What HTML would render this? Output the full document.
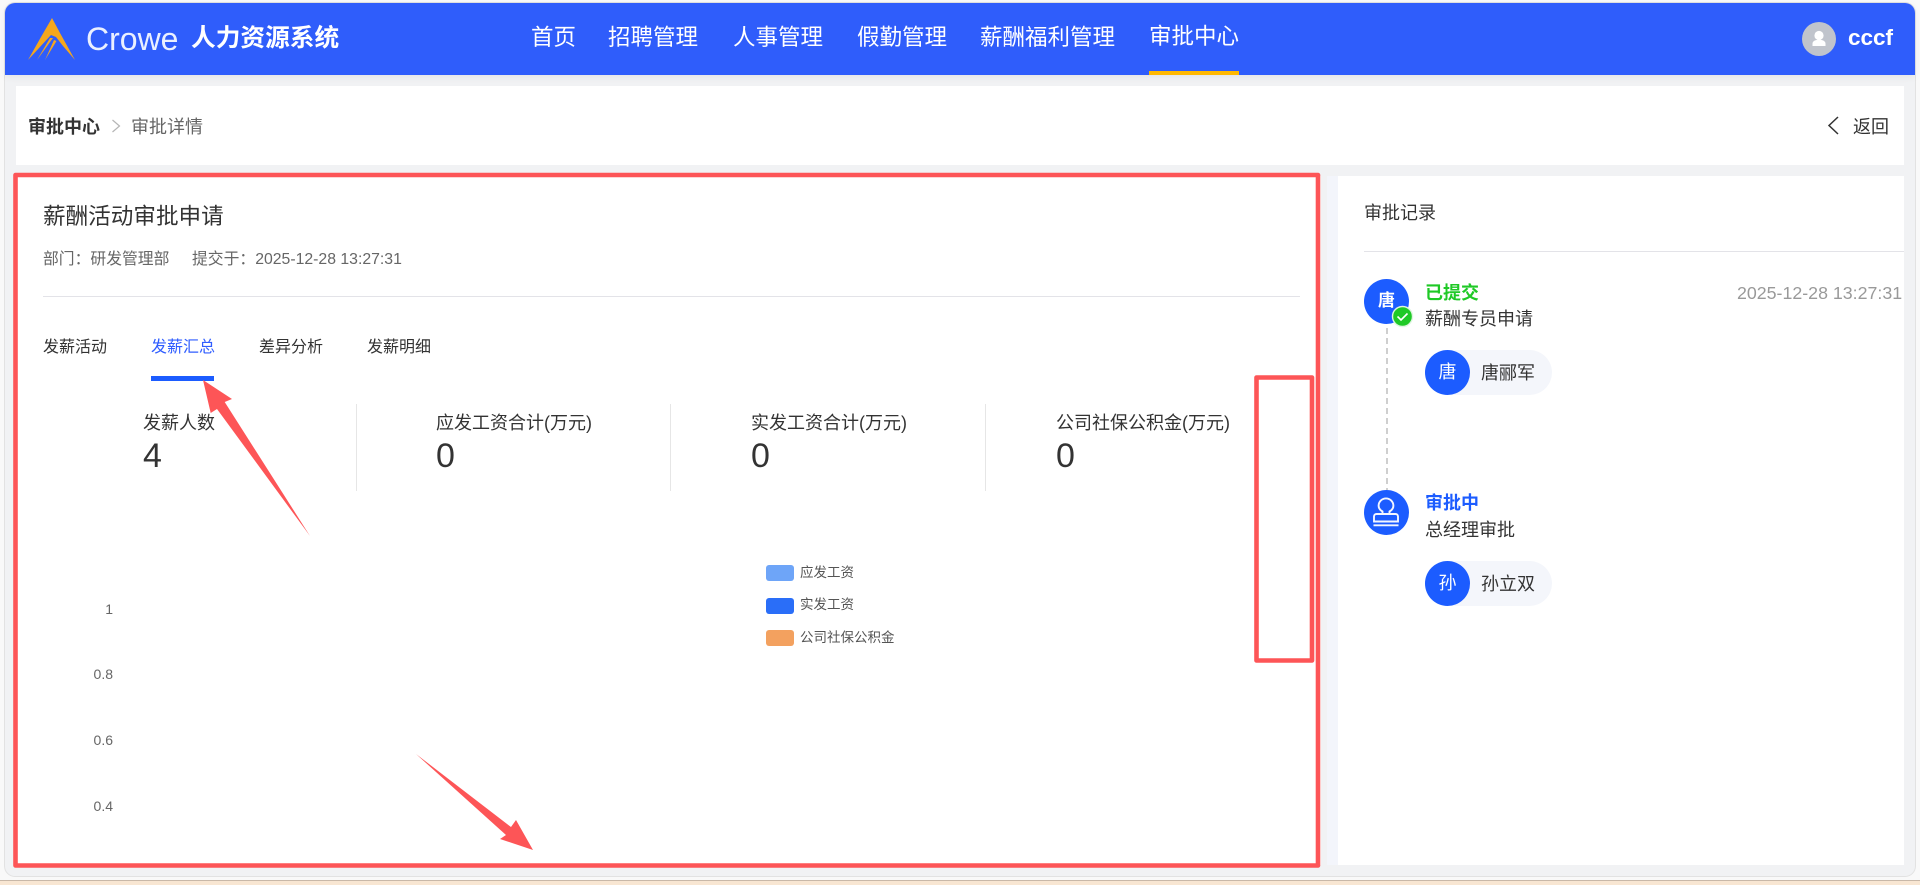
<!DOCTYPE html>
<html lang="zh-CN">
<head>
<meta charset="utf-8">
<title>审批详情</title>
<style>
html,body{margin:0;padding:0;width:1920px;height:885px;overflow:hidden;background:#f9f9f9;}
body{position:relative;font-family:"Liberation Sans","Noto Sans CJK SC",sans-serif;color:#333;}
.a{position:absolute;}
.t{position:absolute;white-space:nowrap;line-height:30px;height:30px;}
.nav{font-size:22.5px;color:#fff;top:23px;}
.c{border-radius:50%;background:#1c5cff;color:#fff;text-align:center;width:45px;height:45px;line-height:44px;font-size:18px;}
.lab{font-size:18px;color:#333;}
.num{font-size:34px;color:#333;line-height:40px;height:40px;}
.dv{position:absolute;width:1px;top:404px;height:87px;background:#e6e6e6;}
.leg{position:absolute;left:766px;width:28px;height:16px;border-radius:3px;}
.lt{font-size:13.5px;color:#555;left:800px;}
.y{font-size:14px;color:#666;text-align:right;width:40px;left:73px;}
</style>
</head>
<body>
<div class="a" style="left:5px;top:3px;width:1910px;height:873px;background:#f1f2f4;border-radius:10px;box-shadow:0 0 0 1px #e2e2e2;"></div>
<div class="a" style="left:0;top:880px;width:1920px;height:5px;background:#f8e6d2;border-top:1px solid #c8b8a8;box-sizing:border-box;"></div>

<!-- header -->
<div class="a" style="left:5px;top:3px;width:1910px;height:72px;background:#2f5dfb;border-radius:10px 10px 0 0;box-shadow:0 2px 8px rgba(0,0,0,.06);"></div>
<div class="t" style="left:86px;top:23px;font-size:32px;line-height:32px;height:32px;color:#eaf0ff;">Crowe</div>
<div class="t" style="left:191px;top:24px;font-size:24.7px;font-weight:700;color:#fff;">人力资源系统</div>
<div class="t nav" style="left:531px;">首页</div>
<div class="t nav" style="left:608px;">招聘管理</div>
<div class="t nav" style="left:733px;">人事管理</div>
<div class="t nav" style="left:857px;">假勤管理</div>
<div class="t nav" style="left:980px;">薪酬福利管理</div>
<div class="t nav" style="left:1149px;top:22px;">审批中心</div>
<div class="a" style="left:1149px;top:71px;width:90px;height:4px;background:#ffb800;"></div>
<div class="a" style="left:1802px;top:22px;width:34px;height:34px;border-radius:50%;background:#c0c4cc;"></div>
<div class="t" style="left:1848px;top:23px;font-size:22.5px;font-weight:700;color:#fff;">cccf</div>

<!-- breadcrumb -->
<div class="a" style="left:16px;top:86px;width:1888px;height:79px;background:#fff;"></div>
<div class="t" style="left:28px;top:112px;font-size:18px;font-weight:700;color:#333;">审批中心</div>
<div class="t" style="left:131px;top:112px;font-size:18px;color:#666;">审批详情</div>
<div class="t" style="left:1853px;top:112px;font-size:18px;color:#333;">返回</div>

<!-- cards -->
<div class="a" style="left:16px;top:176px;width:1305px;height:689px;background:#fff;"></div>
<div class="a" style="left:1327px;top:176px;width:11px;height:689px;background:#f3f5fb;"></div>
<div class="a" style="left:1338px;top:176px;width:566px;height:689px;background:#fff;"></div>

<!-- left content -->
<div class="t" style="left:43px;top:202px;font-size:22.6px;color:#333;">薪酬活动审批申请</div>
<div class="t" style="left:43px;top:245px;font-size:15.8px;color:#666;">部门：研发管理部</div>
<div class="t" style="left:192px;top:245px;font-size:15.8px;color:#666;">提交于：2025-12-28 13:27:31</div>
<div class="a" style="left:43px;top:296px;width:1257px;height:1px;background:#e3e3e8;"></div>

<div class="t" style="left:43px;top:333px;font-size:16px;color:#333;">发薪活动</div>
<div class="t" style="left:151px;top:333px;font-size:16px;color:#2f5dff;">发薪汇总</div>
<div class="t" style="left:259px;top:333px;font-size:16px;color:#333;">差异分析</div>
<div class="t" style="left:367px;top:333px;font-size:16px;color:#333;">发薪明细</div>
<div class="a" style="left:151px;top:376px;width:63px;height:5px;background:#1c5cff;"></div>

<div class="t lab" style="left:143px;top:408px;">发薪人数</div>
<div class="t num" style="left:143px;top:436px;">4</div>
<div class="dv" style="left:356px;"></div>
<div class="t lab" style="left:436px;top:408px;">应发工资合计(万元)</div>
<div class="t num" style="left:436px;top:436px;">0</div>
<div class="dv" style="left:670px;"></div>
<div class="t lab" style="left:751px;top:408px;">实发工资合计(万元)</div>
<div class="t num" style="left:751px;top:436px;">0</div>
<div class="dv" style="left:985px;"></div>
<div class="t lab" style="left:1056px;top:408px;">公司社保公积金(万元)</div>
<div class="t num" style="left:1056px;top:436px;">0</div>

<div class="leg" style="top:565px;background:#6ea5f8;"></div>
<div class="leg" style="top:598px;background:#2a6ef8;"></div>
<div class="leg" style="top:630px;background:#f3a15f;"></div>
<div class="t lt" style="top:558px;">应发工资</div>
<div class="t lt" style="top:590px;">实发工资</div>
<div class="t lt" style="top:623px;">公司社保公积金</div>

<div class="t y" style="top:594px;">1</div>
<div class="t y" style="top:659px;">0.8</div>
<div class="t y" style="top:725px;">0.6</div>
<div class="t y" style="top:791px;">0.4</div>

<!-- right content -->
<div class="t" style="left:1364px;top:198px;font-size:18px;color:#333;">审批记录</div>
<div class="a" style="left:1364px;top:251px;width:540px;height:1px;background:#e3e3e8;"></div>

<div class="a c" style="left:1364px;top:279px;font-weight:700;font-size:17px;">唐</div>
<div class="t" style="left:1425px;top:278px;font-size:18px;font-weight:700;color:#1fc926;">已提交</div>
<div class="t" style="left:1737px;top:278px;font-size:17.8px;color:#999;">2025-12-28 13:27:31</div>
<div class="t" style="left:1425px;top:304px;font-size:18px;color:#333;">薪酬专员申请</div>
<div class="a" style="left:1425px;top:350px;width:127px;height:45px;border-radius:23px;background:#f4f6fb;"></div>
<div class="a c" style="left:1425px;top:350px;">唐</div>
<div class="t" style="left:1481px;top:358px;font-size:18px;color:#333;">唐郦军</div>

<div class="a c" style="left:1364px;top:490px;"></div>
<div class="t" style="left:1425px;top:488px;font-size:18px;font-weight:700;color:#1c5cff;">审批中</div>
<div class="t" style="left:1425px;top:515px;font-size:18px;color:#333;">总经理审批</div>
<div class="a" style="left:1425px;top:561px;width:127px;height:45px;border-radius:23px;background:#f4f6fb;"></div>
<div class="a c" style="left:1425px;top:561px;">孙</div>
<div class="t" style="left:1481px;top:569px;font-size:18px;color:#333;">孙立双</div>

<!-- vector overlay -->
<svg class="a" style="left:0;top:0;" width="1920" height="885" viewBox="0 0 1920 885" xmlns="http://www.w3.org/2000/svg">
  <!-- logo -->
  <g fill="#f5a71c">
    <path d="M52 18 L60 33 L75 60 L63 46 L56 37 L51 35 L28 60 L41 37 Z"/>
    <path d="M50 38 L53 38 L37 60 Z"/>
    <path d="M54 40 L56.5 41 L45 60 Z"/>
  </g>
  <!-- user icon -->
  <circle cx="1819" cy="35.5" r="4.6" fill="#fff"/>
  <path d="M1812.5 46 v-2.5 c0-2.6 3.2-3.8 6.5-3.8 s6.5 1.2 6.5 3.8 V46 Z" fill="#fff"/>
  <!-- breadcrumb chevrons -->
  <path d="M112.5 120 L119.5 126 L112.5 132" fill="none" stroke="#b5b5b5" stroke-width="1.2"/>
  <path d="M1838 117 L1829 125.5 L1838 134" fill="none" stroke="#333" stroke-width="1.5"/>
  <!-- timeline -->
  <line x1="1387" y1="328" x2="1387" y2="490" stroke="#cfcfcf" stroke-width="2" stroke-dasharray="6 4"/>
  <circle cx="1402.5" cy="316.5" r="10" fill="#1fc926" stroke="#dff5e0" stroke-width="1.4"/>
  <path d="M1397.5 316.5 L1401 320 L1407.5 313.5" fill="none" stroke="#fff" stroke-width="1.6"/>
  <!-- stamp icon -->
  <g fill="none" stroke="#fff" stroke-width="1.9" opacity=".95">
    <path d="M1382.5 514 v-2.5 c-2.2-1.3-3.9-3.5-3.9-5.7 a7.4 7.4 0 0 1 14.8 0 c0 2.2-1.7 4.4-3.9 5.7 v2.5"/>
    <path d="M1374 521.5 v-5 a2.5 2.5 0 0 1 2.5-2.5 h19 a2.5 2.5 0 0 1 2.5 2.5 v5 Z"/>
    <path d="M1373.5 525.3 h25"/>
  </g>
  <!-- annotations -->
  <g fill="none" stroke="#fd5557" stroke-width="4.6" stroke-linejoin="round">
    <rect x="15.5" y="175" width="1302.5" height="690.5"/>
    <rect x="1256.5" y="377.5" width="55.5" height="283"/>
  </g>
  <g fill="#fd5557">
    <path d="M203 380 L232 399 L224.7 402 L310 536 L217 409 L210.7 413 Z"/>
    <path d="M416 754 L511 827 L516 820 L533 850 L500 839 L506 835 Z"/>
  </g>
</svg>
</body>
</html>
